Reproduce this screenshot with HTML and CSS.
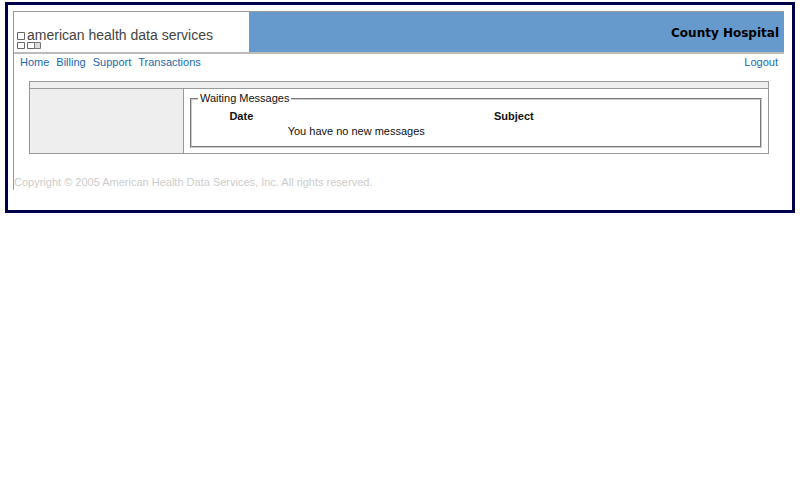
FILE: index.html
```html
<!DOCTYPE html>
<html lang="en">
<head>
<meta charset="utf-8">
<title>American Health Data Services</title>
<link rel="stylesheet" href="styles.css">
</head>
<body>
<div class="frame">
  <div class="page">
    <header class="banner">
      <div class="brand">
        <svg class="brand-mark" width="25" height="18" viewBox="0 0 25 18" fill="none" stroke="#666" aria-hidden="true">
          <path d="M.5 .5h7v7h-7zM.5 10.500h7v6h-7zM10.500 10.500h7v6h-7z"/>
          <path d="M17.500 10.500h6v6h-6z" fill="#ddd" stroke="#777"/>
        </svg>
        <span class="brand-name">american health data services</span>
      </div>
      <div class="client">County Hospital</div>
    </header>
    <nav class="menu">
      <a href="#">Home</a>
      <a href="#">Billing</a>
      <a href="#">Support</a>
      <a href="#">Transactions</a>
      <a class="logout" href="#">Logout</a>
    </nav>
    <main class="panel">
      <div class="strip"></div>
      <div class="columns">
        <aside class="sidebar"></aside>
        <section class="content">
          <fieldset class="messages">
            <legend>Waiting Messages</legend>
            <table>
              <thead><tr><th class="date">Date</th><th>Subject</th></tr></thead>
              <tbody><tr><td></td><td>You have no new messages</td></tr></tbody>
            </table>
          </fieldset>
        </section>
      </div>
    </main>
    <footer class="copyright">Copyright © 2005 American Health Data Services, Inc. All rights reserved.</footer>
  </div>
</div>
</body>
</html>
```
FILE: styles.css
```css
body {
  margin: 2px 5px;
  background: #fff;
  color: #111;
  font: 11px/15px "Liberation Sans", Arial, sans-serif;
}
.frame {
  border: 3px solid #00004d;
  padding: 6px 8px 20px 5px;
}
.page {
  border-left: 1px solid #999;
}
.banner {
  display: flex;
  height: 40px;
  border-top: 1px solid #999;
  border-bottom: 2px solid #bbb;
  background: #69c;
}
.brand {
  display: flex;
  align-items: flex-end;
  width: 235px;
  box-sizing: border-box;
  padding: 0 0 2px 3px;
  background: #fff;
}
.brand-mark {
  flex: none;
  margin-right: -15px;
}
.brand-name {
  padding-bottom: 6px;
  color: #444;
  font-size: 14px;
  line-height: 18px;
  white-space: nowrap;
}
.client {
  margin-left: auto;
  padding-right: 5px;
  color: #000;
  font: bold 12px/42px "DejaVu Sans", Verdana, sans-serif;
}
.menu {
  display: flex;
  gap: 7px;
  padding: 1px 6px 11px;
}
.menu a {
  color: #1a69b0;
  text-decoration: none;
}
.menu .logout {
  margin-left: auto;
}
.panel {
  margin: 0 15px;
  border: 1px solid #999;
}
.strip {
  height: 6px;
  border-bottom: 1px solid #999;
  background: #eee;
}
.columns {
  display: flex;
}
.sidebar {
  flex: 0 0 153px;
  background: #eee;
}
.content {
  flex: 1;
  border-left: 1px solid #999;
  padding: 2px 6px 5px;
}
.messages {
  margin: 0;
  border: 2px groove #ccc;
  padding: 0 3px 7px;
}
.messages legend {
  margin-left: 3px;
  padding: 0 2px;
}
.messages table {
  width: 97%;
  border-collapse: collapse;
}
.messages th,
.messages td {
  padding: 0;
}
.messages .date {
  width: 17%;
}
.messages th {
  padding: 3px 0 0;
}
.copyright {
  padding-top: 21px;
  color: #ccc;
}
```
